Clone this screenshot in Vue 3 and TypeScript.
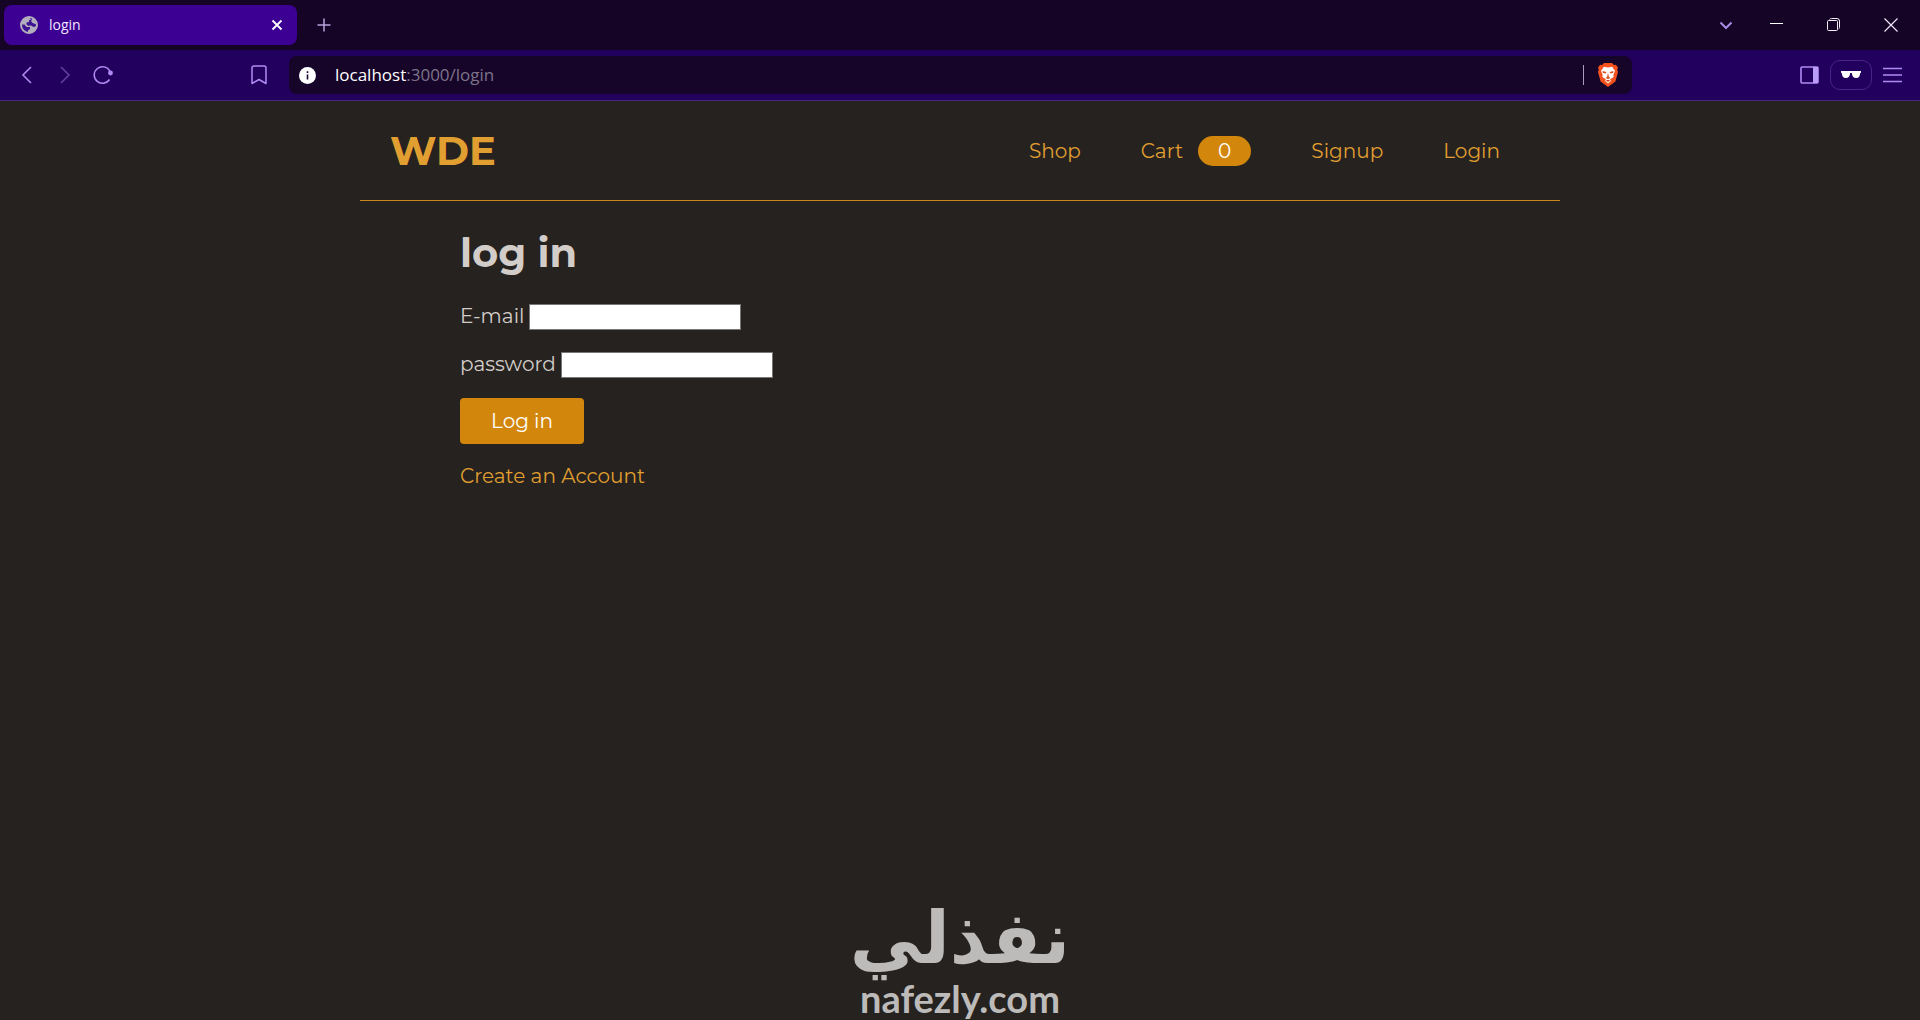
<script setup lang="ts">
import { ref } from 'vue'

interface NavItem {
  label: string
  href: string
  count?: number
}

const navItems: NavItem[] = [
  { label: 'Shop', href: '#shop' },
  { label: 'Cart', href: '#cart', count: 0 },
  { label: 'Signup', href: '#signup' },
  { label: 'Login', href: '#login' },
]

const email = ref('')
const password = ref('')
</script>

<template>
  <div class="window">
    <div class="tab-strip">
      <div class="tab">
        <svg class="favicon" width="18" height="18" viewBox="0 0 18 18">
          <circle cx="9" cy="9" r="8" fill="#3c1494" stroke="#b3aebd" stroke-width="2" />
          <path d="M9 1C4 1 1 5 1 8.500h3.500L6.500 11H10v2l-2 1.500V17c4 0 8-2.500 9-7l-3.500 1-2.500-1.500-3 .2-1.500-1.400V6.500L9 6V4h2z" fill="#b3aebd" />
          <path d="M12.500 2.500L11 5l1.500 2 4.300 1.500C17 6 15 3.500 12.500 2.500z" fill="#b3aebd" />
        </svg>
        <span class="tab-title">login</span>
        <button class="icon-button" aria-label="Close tab">
          <svg width="12" height="12" viewBox="0 0 12 12"><path d="M1.500 1.500l9 9M10.500 1.500l-9 9" stroke="#fff" stroke-width="1.800" /></svg>
        </button>
      </div>
      <button class="icon-button new-tab" aria-label="New tab">
        <svg width="14" height="14" viewBox="0 0 14 14"><path d="M7 .5v13M.5 7h13" stroke="#b8a3dc" stroke-width="1.500" /></svg>
      </button>
      <button class="icon-button search-tabs" aria-label="Search tabs">
        <svg width="14" height="14" viewBox="0 0 14 14"><path d="M1.500 4.500L7 10l5.500-5.500" fill="none" stroke="#a98be6" stroke-width="2" /></svg>
      </button>
      <div class="window-controls">
        <button class="icon-button" aria-label="Minimize">
          <svg width="14" height="14" viewBox="0 0 14 14"><path d="M0 5.500h13" stroke="#fff" /></svg>
        </button>
        <button class="icon-button" aria-label="Restore">
          <svg width="14" height="14" viewBox="0 0 14 14" fill="none" stroke="#f3eefa">
            <rect x=".5" y="2.500" width="10" height="10" rx="1" />
            <path d="M2.500 1.500Q3 .5 4.500.5h5.500Q12.500.5 12.500 3v6.500q0 1-1 1.500" />
          </svg>
        </button>
        <button class="icon-button" aria-label="Close">
          <svg width="14" height="14" viewBox="0 0 14 14"><path d="M.5.5l13 13M13.500.5l-13 13" stroke="#eee6fa" stroke-width="1.200" /></svg>
        </button>
      </div>
    </div>

    <div class="toolbar">
      <div class="history">
        <button class="icon-button" aria-label="Back">
          <svg width="20" height="20" viewBox="0 0 20 20"><path d="M14 2L6 10l8 8" fill="none" stroke="#b18bf4" stroke-width="1.600" /></svg>
        </button>
        <button class="icon-button" aria-label="Forward">
          <svg width="20" height="20" viewBox="0 0 20 20"><path d="M6 2l8 8-8 8" fill="none" stroke="#60409f" stroke-width="1.600" /></svg>
        </button>
        <button class="icon-button" aria-label="Reload">
          <svg width="20" height="20" viewBox="0 0 20 20">
            <path d="M16.500 14.500A8.300 8.300 0 1 1 16.800 6" fill="none" stroke="#b18bf4" stroke-width="1.500" />
            <circle cx="17.500" cy="8" r="2.400" fill="#b18bf4" />
          </svg>
        </button>
      </div>
      <button class="icon-button bookmark" aria-label="Bookmark">
        <svg width="16" height="20" viewBox="0 0 16 20"><path d="M3 1h10q2 0 2 2v15.500l-7-4-7 4V3q0-2 2-2z" fill="none" stroke="#b18bf4" stroke-width="1.500" stroke-linejoin="round" /></svg>
      </button>
      <div class="address-bar">
        <svg class="info" width="17" height="17" viewBox="0 0 17 17">
          <circle cx="8.500" cy="8.500" r="8.500" fill="#fff" />
          <path d="M8.500 7.500v5M8.500 4.200v1.800" stroke="#1a0730" stroke-width="1.600" />
        </svg>
        <span class="url"><span class="host">localhost</span>:3000/login</span>
        <span class="divider"></span>
        <button class="icon-button" aria-label="Brave Shields">
          <svg width="20" height="24" viewBox="0 0 20 24">
            <path d="M6 0h8l1.800 2 2-.2L20 4.500l-.8 2 .8 2.500-2.600 9.500L10 24l-7.400-5.500L0 9l.8-2.500L0 4.500l2.200-2.700 2 .2z" fill="#f4511e" />
            <path d="M10 4.500L14 3.800l3 4-1.600 4 .2 2.200-3 2-.6.5 1 1.300L10 20.500l-3-2.700 1-1.300-.6-.5-3-2 .2-2.200-1.600-4 3-4z" fill="#fff" />
            <path d="M4.500 8l4 1-1 1.600-2.600-.8M15.500 8l-4 1 1 1.600 2.600-.8M10 9.500l-.8 4.200L7.600 15l2.400 1 2.400-1-1.600-1.300zM7.800 17.600L10 16.800l2.200.8L10 19z" fill="#d9481c" />
          </svg>
        </button>
      </div>
      <div class="tools">
        <button class="icon-button" aria-label="Sidebar">
          <svg width="19" height="18" viewBox="0 0 19 18">
            <rect x="1" y="1" width="17" height="16" rx="1" fill="none" stroke="#b18bf4" stroke-width="1.600" />
            <rect x="13" y="1" width="5" height="16" fill="#b99bf8" />
          </svg>
        </button>
        <button class="private" aria-label="Private window">
          <svg width="22" height="10" viewBox="0 0 22 10">
            <path d="M1 1h20v1.500l-.8.8C19.800 6.500 19 8 16.200 8S12.200 6.500 11.800 3h-1.600C9.800 6.500 8.600 8 5.800 8S2.200 6.500 1.800 3.300L1 2.500z" fill="#fff" />
          </svg>
        </button>
        <button class="icon-button" aria-label="Menu">
          <svg width="19" height="16" viewBox="0 0 19 16"><path d="M0 1.500h19M0 8h19M0 14.500h19" stroke="#b18bf4" stroke-width="1.500" /></svg>
        </button>
      </div>
    </div>

    <div class="page">
      <header class="site-header">
        <a class="brand" href="#home">WDE</a>
        <nav class="site-nav">
          <a v-for="item in navItems" :key="item.label" :href="item.href">
            {{ item.label }}<span v-if="item.count !== undefined" class="badge">{{ item.count }}</span>
          </a>
        </nav>
      </header>

      <main class="content">
        <h1>log in</h1>
        <form @submit.prevent>
          <div class="field">
            <label for="email">E-mail</label>
            <input id="email" v-model="email" type="email" />
          </div>
          <div class="field">
            <label for="password">password</label>
            <input id="password" v-model="password" type="password" />
          </div>
          <button class="submit" type="submit">Log in</button>
        </form>
        <a class="create" href="#signup">Create an Account</a>
      </main>

      <footer class="watermark">
        <span class="watermark-name" lang="ar" dir="rtl">نفذلي</span>
        <span class="watermark-site">nafezly.com</span>
      </footer>
    </div>
  </div>
</template>

<style>
body {
  margin: 0;
  background: #26221f;
}
</style>

<style scoped>
.window {
  display: flex;
  flex-direction: column;
  min-height: 100vh;
  background: #26221f;
  font-family: "Open Sans", "Noto Sans", sans-serif;
}
.window * {
  box-sizing: border-box;
}
a {
  color: #e09f30;
  text-decoration: none;
}
svg {
  display: block;
  flex: none;
}
.icon-button {
  padding: 0;
  border: 0;
  background: none;
}
.tab-strip {
  display: flex;
  align-items: center;
  height: 50px;
  padding: 0 22px 0 4px;
  background: #150426;
}
.tab {
  display: flex;
  align-items: center;
  gap: 11px;
  width: 293px;
  height: 40px;
  padding: 0 14px 0 16px;
  border-radius: 8px;
  background: #3c0092;
  color: #f1e6ff;
  font-size: 14px;
}
.tab-title {
  flex: 1;
  padding-bottom: 2px;
}
.new-tab {
  margin-left: 20px;
}
.search-tabs {
  margin-left: auto;
}
.window-controls {
  display: flex;
  gap: 43px;
  margin-left: 37px;
}
.toolbar {
  display: flex;
  align-items: center;
  height: 51px;
  padding: 0 18px 0 17px;
  border-bottom: 1px solid #45297d;
  background: #22005e;
}
.history {
  display: flex;
  gap: 18px;
}
.bookmark {
  margin-left: 138px;
}
.address-bar {
  display: flex;
  flex: 1;
  align-items: center;
  height: 38px;
  margin-left: 22px;
  padding: 0 14px 0 10px;
  border-radius: 8px;
  background: #160529;
}
.url {
  flex: 1;
  margin-left: 19px;
  padding-bottom: 2px;
  color: #7d7389;
  font-size: 17px;
}
.host {
  color: #fff;
}
.divider {
  width: 1px;
  height: 20px;
  margin-right: 14px;
  background: #a99bbd;
}
.tools {
  display: flex;
  align-items: center;
  justify-content: flex-end;
  gap: 11px;
  width: 270px;
}
.private {
  display: flex;
  align-items: center;
  justify-content: center;
  width: 42px;
  height: 30px;
  padding: 0;
  border: 1px solid #48248a;
  border-radius: 10px;
  background: none;
}
.page {
  display: flex;
  flex: 1;
  flex-direction: column;
  color: #d3cdc9;
  font-family: Montserrat, Inter, sans-serif;
  font-size: 20px;
  line-height: 30px;
}
.site-header {
  display: flex;
  align-items: center;
  justify-content: space-between;
  width: 100%;
  max-width: 1200px;
  height: 100px;
  margin: 0 auto;
  padding: 0 60px 0 30px;
  border-bottom: 1px solid #c9861a;
}
.brand {
  font-size: 40px;
  font-weight: 700;
}
.site-nav {
  display: flex;
  gap: 60px;
}
.site-nav a {
  display: flex;
  align-items: center;
}
.badge {
  margin-left: 15px;
  padding: 0 20px;
  border-radius: 15px;
  background: #d2870c;
  color: #fff;
}
.content {
  width: 100%;
  max-width: 1000px;
  margin: 0 auto;
}
h1 {
  margin: 26px 0 23px;
  font-size: 40px;
  line-height: 52px;
}
.field {
  display: flex;
  align-items: flex-end;
  gap: 5px;
  height: 28px;
  margin-bottom: 20px;
}
.field label {
  line-height: 28px;
}
.field input {
  width: 212px;
  height: 26px;
  padding: 1px 2px;
  border: 1px solid #767676;
  background: #fff;
  font: inherit;
}
.submit {
  display: block;
  height: 46px;
  padding: 0 31px;
  border: 0;
  border-radius: 4px;
  background: #d2870c;
  color: #fff;
  font: inherit;
}
.create {
  display: inline-block;
  margin-top: 17px;
}
.watermark {
  display: flex;
  flex-direction: column;
  align-items: center;
  margin-top: auto;
  color: #bcbbba;
}
.watermark-name {
  font-family: "DejaVu Sans", sans-serif;
  font-size: 72px;
  font-weight: 700;
  line-height: 76px;
}
.watermark-site {
  font-family: Lato, sans-serif;
  font-size: 38px;
  font-weight: 700;
  line-height: 44px;
}
</style>
